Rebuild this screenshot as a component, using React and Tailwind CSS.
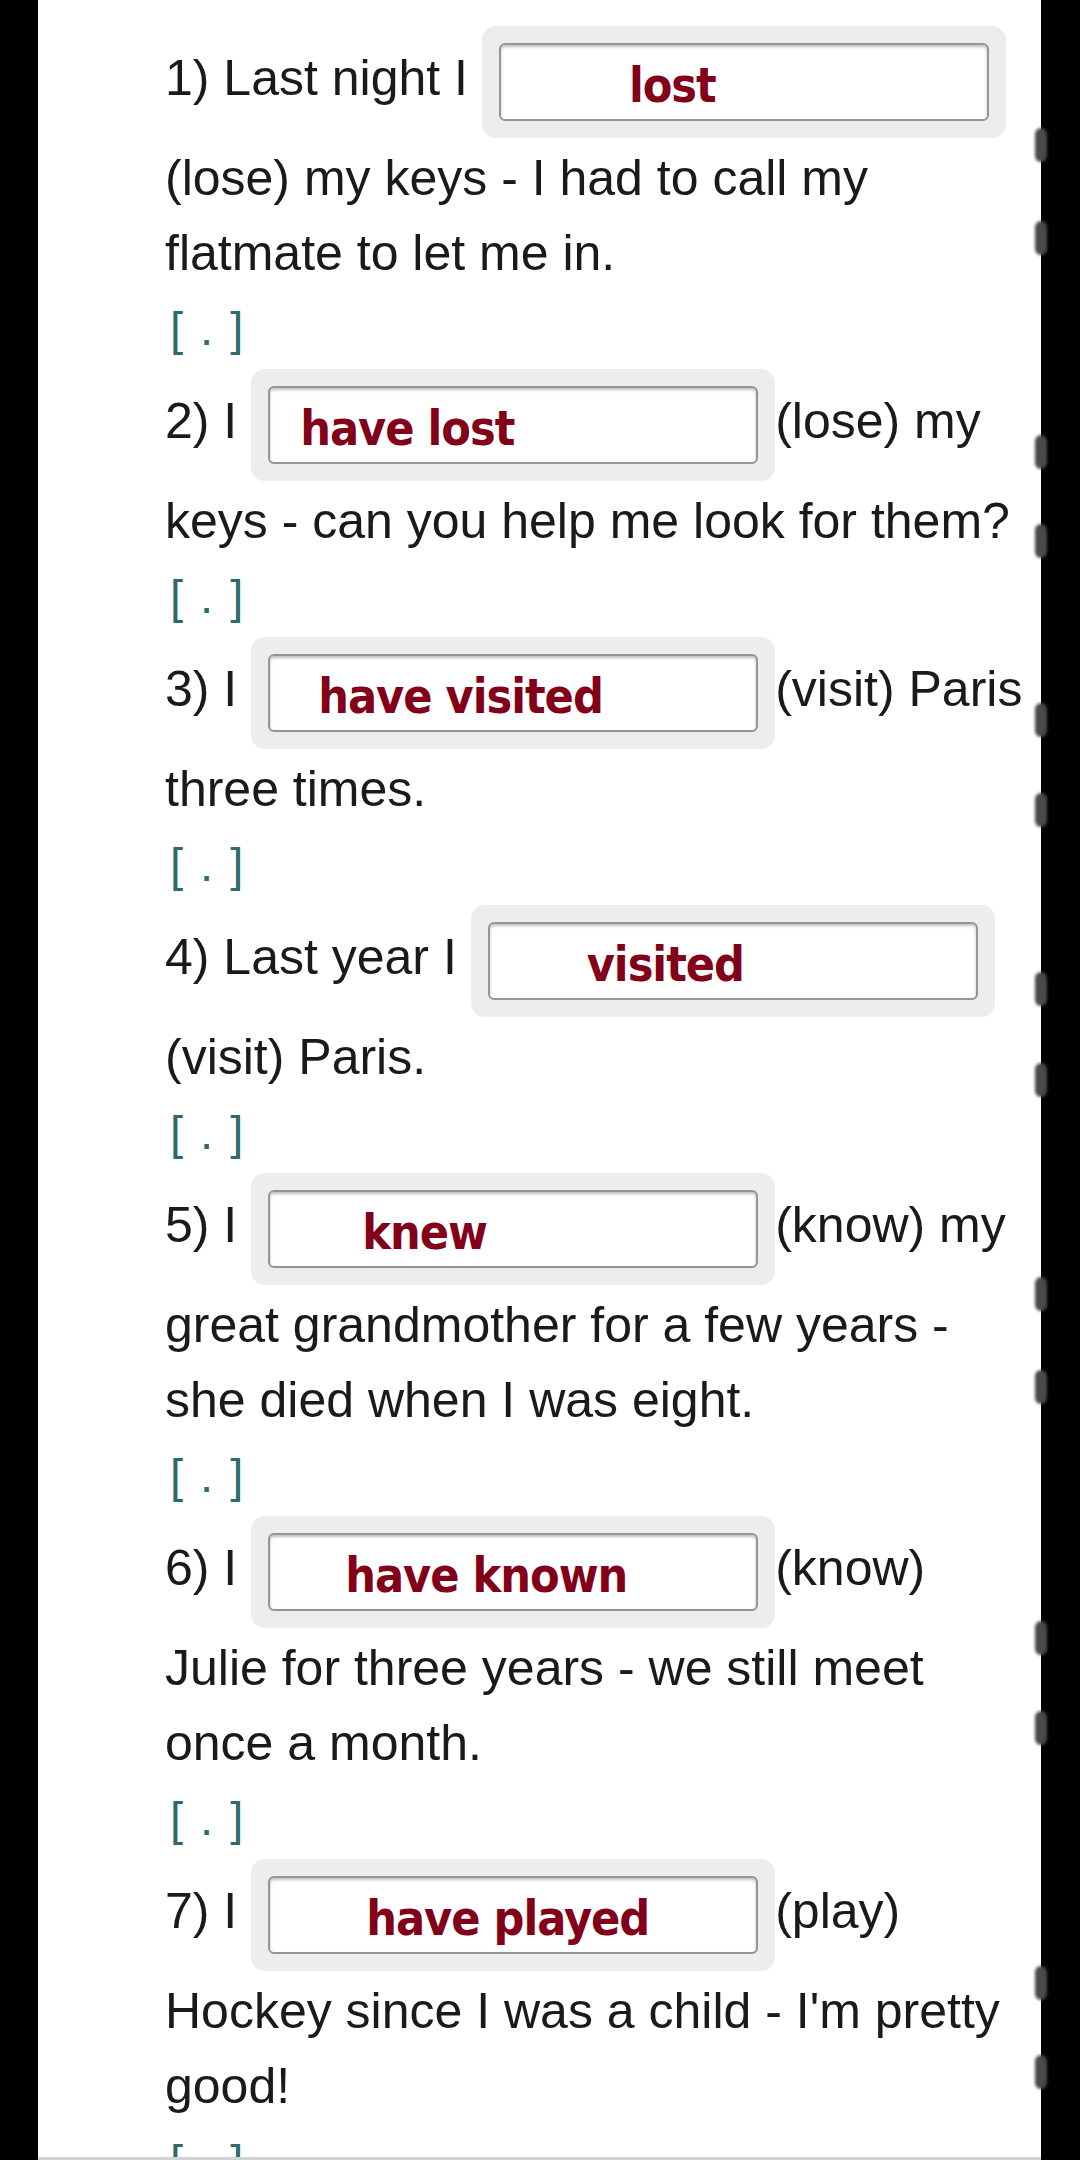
const ITEMS = [
  { n: 1, before: 'Last night I', answer: 'lost', pad: 'pl-[128px]', after: '(lose) my keys - I had to call my flatmate to let me in.' },
  { n: 2, before: 'I', answer: 'have lost', pad: 'pl-[30px]', after: '(lose) my keys - can you help me look for them?' },
  { n: 3, before: 'I', answer: 'have visited', pad: 'pl-[48px]', after: '(visit) Paris three times.' },
  { n: 4, before: 'Last year I', answer: 'visited', pad: 'pl-[97px]', after: '(visit) Paris.' },
  { n: 5, before: 'I', answer: 'knew', pad: 'pl-[92px]', after: '(know) my great grandmother for a few years - she died when I was eight.' },
  { n: 6, before: 'I', answer: 'have known', pad: 'pl-[75px]', after: '(know) Julie for three years - we still meet once a month.' },
  { n: 7, before: 'I', answer: 'have played', pad: 'pl-[96px]', after: "(play) Hockey since I was a child - I'm pretty good!" }
];

// little grey notches along the right page edge
const NOTCHES = [
  'top-[128px]', 'top-[221px]', 'top-[435px]', 'top-[524px]', 'top-[703px]', 'top-[793px]', 'top-[972px]',
  'top-[1063px]', 'top-[1277px]', 'top-[1370px]', 'top-[1621px]', 'top-[1711px]', 'top-[1966px]', 'top-[2055px]'
];

function Blank({ answer, pad }) {
  return (
    <span className="my-[3px] inline-block rounded-[14px] bg-[#ededed] p-[17px] align-middle">
      <span
        className={`flex h-[78px] w-[490px] items-center rounded-[6px] border-2 border-[#959595] bg-white shadow-[inset_0_2px_3px_rgba(0,0,0,0.25)] ${pad}`}
      >
        <span className="pt-[6px] font-['DejaVu_Sans_Condensed','DejaVu_Sans',sans-serif] text-[48px] font-bold leading-none tracking-[-1px] text-[#830019]">
          {answer}
        </span>
      </span>
    </span>
  );
}

function Question({ item }) {
  return (
    <div>
      <p>
        {item.n}) {item.before} <Blank answer={item.answer} pad={item.pad} />
        <wbr />
        {item.after}
      </p>
      <p className="pl-[5px] text-[47px] tracking-[2px] text-[#2d6a6a]">[ . ]</p>
    </div>
  );
}

export default function App() {
  return (
    <div className="flex h-[2160px] w-[1080px] overflow-hidden bg-black">
      <div className="w-[38px] shrink-0 bg-black" />
      <main className="h-full w-[1003px] shrink-0 overflow-hidden border-b-[3px] border-[#d2d2d2] bg-white pl-[127px] pr-[11px] pt-[23px] font-['Liberation_Sans',Arial,sans-serif] text-[50px] leading-[75px] text-[#1a1a1a]">
        {ITEMS.map((item) => (
          <Question key={item.n} item={item} />
        ))}
      </main>
      <div className="relative w-[39px] shrink-0 bg-black">
        {NOTCHES.map((top) => (
          <span key={top} className={`absolute -left-[6px] h-[34px] w-[12px] rounded-full bg-[#4a4a4a] blur-[1.5px] ${top}`} />
        ))}
      </div>
    </div>
  );
}
